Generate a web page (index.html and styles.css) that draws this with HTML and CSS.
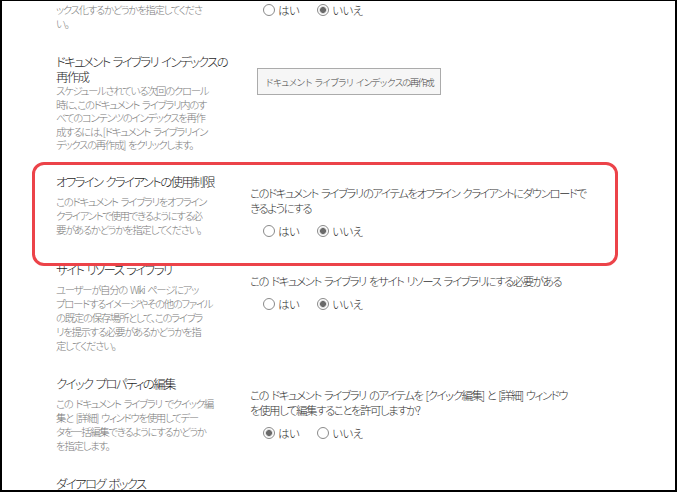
FILE: index.html
```html
<!DOCTYPE html>
<html>
<head>
  <meta charset="utf-8">
  <title>ライブラリの詳細設定</title>
  <link rel="stylesheet" href="styles.css">
</head>
<body>
  <div class="page">
    <div class="section">
      <div class="info">
        <h3 class="title">検索</h3>
        <p class="desc">このドキュメント ライブラリのアイテムをインデ<br>ックス化するかどうかを指定してくださ<br>い。</p>
      </div>
      <div class="control">
        <p class="question">このドキュメント ライブラリのアイテムを検索結果に表示しますか?</p>
        <div class="choices">
          <label class="choice"><input type="radio" class="radio" name="search">はい</label>
          <label class="choice"><input type="radio" class="radio" name="search" checked>いいえ</label>
        </div>
      </div>
    </div>

    <div class="section section-tight">
      <div class="info">
        <h3 class="title">ドキュメント ライブラリ インデックスの<br>再作成</h3>
        <p class="desc">スケジュールされている次回のクロール<br>時に、このドキュメント ライブラリ内のす<br>べてのコンテンツのインデックスを再作<br>成するには、[ドキュメント ライブラリイン<br>デックスの再作成] をクリックします。</p>
      </div>
      <div class="control">
        <button class="rebuild">ドキュメント ライブラリ インデックスの再作成</button>
      </div>
    </div>

    <div class="section highlight">
      <div class="info">
        <h3 class="title">オフライン クライアントの使用制限</h3>
        <p class="desc">このドキュメント ライブラリをオフライン<br>クライアントで使用できるようにする必<br>要があるかどうかを指定してください。</p>
      </div>
      <div class="control">
        <p class="question">このドキュメント ライブラリのアイテムをオフライン クライアントにダウンロードで<br>きるようにする</p>
        <div class="choices">
          <label class="choice"><input type="radio" class="radio" name="offline">はい</label>
          <label class="choice"><input type="radio" class="radio" name="offline" checked>いいえ</label>
        </div>
      </div>
    </div>

    <div class="section">
      <div class="info">
        <h3 class="title">サイト リソース ライブラリ</h3>
        <p class="desc">ユーザーが自分の Wiki ページにアッ<br>プロードするイメージやその他のファイル<br>の既定の保存場所として、このライブラ<br>リを提示する必要があるかどうかを指<br>定してください。</p>
      </div>
      <div class="control">
        <p class="question">この ドキュメント ライブラリ をサイト リソース ライブラリにする必要がある</p>
        <div class="choices">
          <label class="choice"><input type="radio" class="radio" name="resource">はい</label>
          <label class="choice"><input type="radio" class="radio" name="resource" checked>いいえ</label>
        </div>
      </div>
    </div>

    <div class="section">
      <div class="info">
        <h3 class="title">クイック プロパティの編集</h3>
        <p class="desc">この ドキュメント ライブラリ でクイック編<br>集と [詳細] ウィンドウを使用してデー<br>タを一括編集できるようにするかどうか<br>を指定します。</p>
      </div>
      <div class="control">
        <p class="question">この ドキュメント ライブラリ のアイテムを [クイック編集] と [詳細] ウィンドウ<br>を使用して編集することを許可しますか?</p>
        <div class="choices">
          <label class="choice"><input type="radio" class="radio" name="quickedit" checked>はい</label>
          <label class="choice"><input type="radio" class="radio" name="quickedit">いいえ</label>
        </div>
      </div>
    </div>

    <div class="section">
      <div class="info">
        <h3 class="title">ダイアログ ボックス</h3>
        <p class="desc">フォームをダイアログ ボックスで開くかどう<br>かを指定します。</p>
      </div>
      <div class="control">
        <p class="question">ダイアログ ボックスでフォームを開きます</p>
      </div>
    </div>
  </div>
</body>
</html>
```

FILE: styles.css
```css
* {
  box-sizing: border-box;
}
html,
body {
  height: 100%;
}
body {
  margin: 0;
  overflow: hidden;
  background: #fff;
  border-style: solid;
  border-color: #000;
  border-width: 1px 2px 2px 2px;
  color: #444;
  font-family: "Noto Sans CJK JP", "Noto Sans", sans-serif;
  font-weight: 300;
  font-feature-settings: "palt";
  word-spacing: 2px;
}
.page {
  margin-top: -33px;
  padding-left: 54px;
}
.section {
  display: grid;
  grid-template-columns: 160px 345px;
  column-gap: 34px;
  padding-bottom: 23px;
}
.title {
  margin: 0;
  font-size: 12.5px;
  line-height: 16px;
  font-weight: 300;
  letter-spacing: -1.7px;
  color: #1e1e1e;
  white-space: nowrap;
}
.desc {
  margin: 5px 0 0;
  font-size: 10.5px;
  line-height: 14px;
  letter-spacing: -1.4px;
  color: #7a7a7a;
  white-space: nowrap;
}
.section-tight .title {
  line-height: 15px;
}
.section-tight .desc {
  margin-top: 0;
  line-height: 13.5px;
}
.section-tight {
  padding-bottom: 22px;
}
.control {
  padding-top: 12px;
}
.question {
  margin: 0;
  font-size: 11.5px;
  line-height: 15px;
  letter-spacing: -1.5px;
  color: #333;
  white-space: nowrap;
}
.choices {
  display: flex;
  align-items: center;
  height: 16px;
  margin: 7px 0 0 13px;
  font-size: 11.5px;
  letter-spacing: -0.6px;
  color: #333;
}
.choice {
  display: flex;
  align-items: center;
  gap: 3px;
  margin-right: 18px;
}
.radio {
  appearance: none;
  margin: 0;
  width: 12px;
  height: 12px;
  border: 1px solid #8a8a8a;
  border-radius: 50%;
  background: #fff;
}
.radio:checked {
  background: radial-gradient(circle, #6a6a6a 0 2.6px, #cfcfcf 3.2px, #fff 4.2px);
}
.rebuild {
  margin: 2px 0 0 7px;
  width: 184px;
  height: 27px;
  padding: 0;
  border: 1px solid #ababab;
  background: #f6f6f6;
  color: #444;
  font-family: inherit;
  font-weight: 300;
  font-size: 9.5px;
  letter-spacing: -1.7px;
  word-spacing: 2px;
  white-space: nowrap;
}
.highlight {
  position: relative;
}
.highlight::after {
  content: "";
  position: absolute;
  top: -12px;
  left: -24px;
  width: 580px;
  height: 98px;
  border: 3px solid #ec4349;
  border-radius: 12px;
}
```
